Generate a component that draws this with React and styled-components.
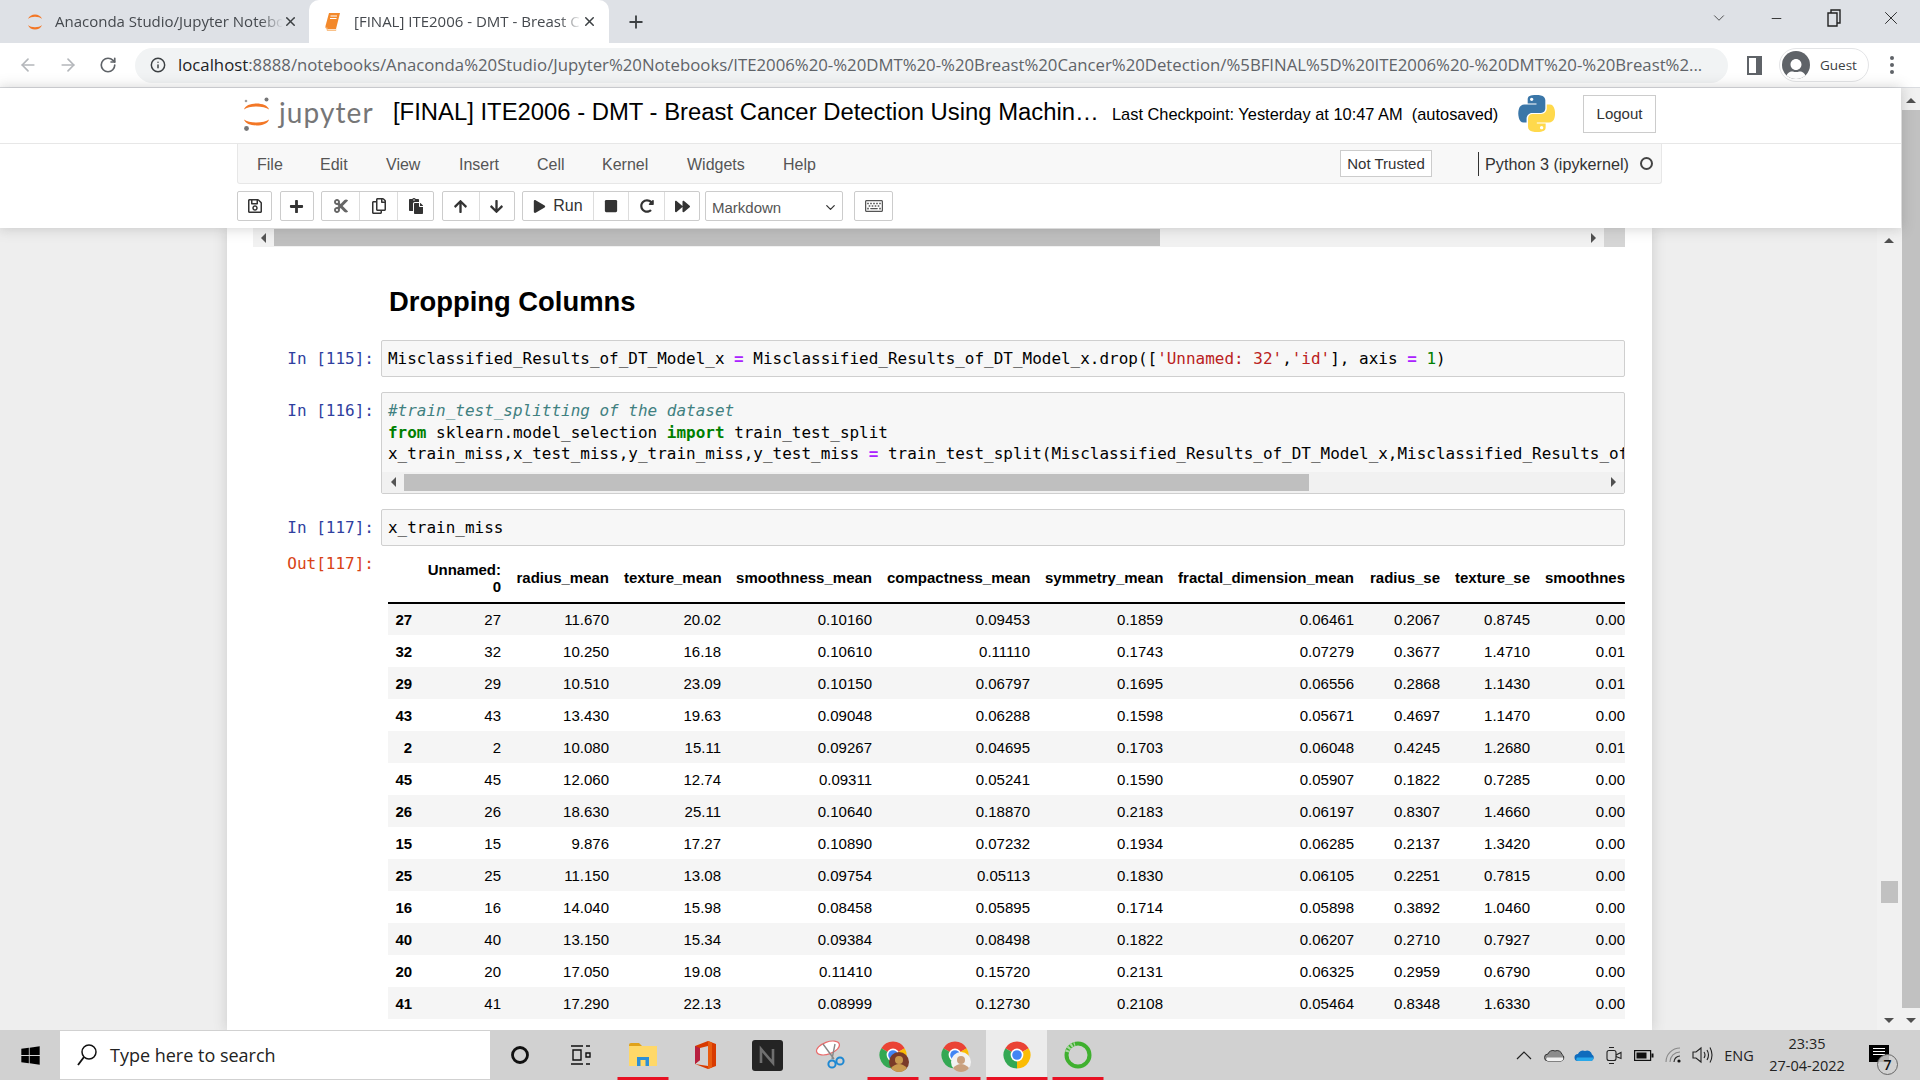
import React from "react";
import styled, { createGlobalStyle } from "styled-components";
import { ArrowLeft, ArrowRight, RotateCw, Info, Plus, X, ChevronDown, Minus } from "lucide-react";
import {
  FaRegSave, FaPlus, FaCut, FaRegCopy, FaPaste, FaArrowUp, FaArrowDown,
  FaPlay, FaStop, FaRedoAlt, FaForward, FaRegKeyboard, FaWindows, FaUser,
} from "react-icons/fa";

const Global = createGlobalStyle`
  html, body { margin: 0; padding: 0; width: 1920px; height: 1080px; overflow: hidden; }
  body { font-family: "Liberation Sans", Arial, sans-serif; background: #eee; }
  * { box-sizing: border-box; }
`;

const Page = styled.div`
  width: 1920px;
  height: 1080px;
  display: flex;
  flex-direction: column;
  overflow: hidden;
`;

/* browser chrome */
const TabStrip = styled.div`
  height: 43px;
  background: #dee1e6;
  display: flex;
  align-items: stretch;
`;
const Tab = styled.div`
  position: relative;
  width: ${(p) => (p.$active ? 300 : 309)}px;
  padding-left: ${(p) => (p.$active ? 15 : 25)}px;
  padding-right: ${(p) => (p.$active ? 12 : 11)}px;
  display: flex;
  align-items: center;
  background: ${(p) => (p.$active ? "#fff" : "transparent")};
  border-radius: 10px 10px 0 0;
`;
const TabTitle = styled.div`
  flex: 1;
  font-family: "Open Sans", sans-serif;
  font-size: 15px;
  color: #45494e;
  white-space: nowrap;
  overflow: hidden;
  margin: -2px 0 0 ${(p) => (p.$active ? 13 : 10)}px;
  -webkit-mask-image: linear-gradient(to right, #000 90%, transparent 100%);
  mask-image: linear-gradient(to right, #000 90%, transparent 100%);
`;
const NewTab = styled.div`
  width: 54px;
  display: flex;
  align-items: center;
  justify-content: center;
  color: #3c4043;
`;
const WindowControls = styled.div`
  margin-left: auto;
  display: flex;
  color: #222;
`;
const WindowButton = styled.div`
  width: 57.5px;
  height: 36px;
  display: flex;
  align-items: center;
  justify-content: center;
`;

const AddressRow = styled.div`
  height: 45px;
  background: #fff;
  border-bottom: 1px solid #dadce0;
  display: flex;
  align-items: center;
  padding-left: 8px;
  color: #5f6368;
`;
const NavButton = styled.div`
  width: 40px;
  display: flex;
  justify-content: center;
  color: ${(p) => (p.$off ? "#b4b7bb" : "#5f6368")};
`;
const Omnibox = styled.div`
  width: 1593px;
  height: 35px;
  margin-left: 7px;
  background: #f1f3f4;
  border-radius: 18px;
  display: flex;
  align-items: center;
  padding-left: 15px;
`;
const Url = styled.div`
  margin: -2px 0 0 12px;
  font-family: "Open Sans", sans-serif;
  font-size: 16.75px;
  color: #5f6368;
  white-space: nowrap;
  b { font-weight: 400; color: #202124; }
`;
const PanelIcon = styled.div`
  width: 15px;
  height: 19px;
  margin-left: 19px;
  border: 2px solid #5f6368;
  border-right-width: 6px;
`;
const GuestPill = styled.div`
  width: 90px;
  height: 34px;
  margin-left: 17px;
  border: 1px solid #e3e4e6;
  border-radius: 17px;
  display: flex;
  align-items: center;
  padding-left: 2px;
  font-family: "Open Sans", sans-serif;
  font-size: 13.5px;
  color: #3c4043;
`;
const Avatar = styled.div`
  width: 28px;
  height: 28px;
  border-radius: 50%;
  background: #5f6368;
  color: #fff;
  overflow: hidden;
  display: flex;
  align-items: flex-end;
  justify-content: center;
  margin-right: 10px;
  svg { margin-bottom: -2px; }
`;
const Dots = styled.div`
  margin-left: 21px;
  display: flex;
  flex-direction: column;
  gap: 3px;
  i { width: 4px; height: 4px; border-radius: 50%; background: #5f6368; }
`;

const Viewport = styled.div`
  flex: 1;
  min-height: 0;
  display: flex;
`;
const Main = styled.div`
  width: 1901px;
  display: flex;
  flex-direction: column;
`;

/* jupyter header */
const Header = styled.div`
  position: relative;
  z-index: 2;
  background: #fff;
  box-shadow: 0 0 12px 1px rgba(87, 87, 87, 0.25);
  height: 140px;
`;
const TitleRow = styled.div`
  height: 56px;
  border-bottom: 1px solid #e7e7e7;
  display: flex;
  align-items: center;
  padding: 0 0 4px 243px;
`;
const LogoText = styled.div`
  font-family: "Lato", sans-serif;
  font-size: 28px;
  color: #767677;
  margin: -3px 0 0 8px;
  letter-spacing: 1.1px;
  width: 114px;
`;
const NotebookName = styled.div`
  font-size: 23.85px;
  color: #000;
  width: 716px;
  white-space: nowrap;
  margin-top: -4px;
`;
const Checkpoint = styled.div`
  font-size: 16.4px;
  color: #000;
  margin: 1px 0 0 3px;
  white-space: pre;
  width: 406px;
`;
const PythonSvg = styled.svg`
  flex: none;
`;
const Logout = styled.div`
  width: 73px;
  height: 38px;
  margin-left: 28px;
  border: 1px solid #ccc;
  display: flex;
  align-items: center;
  justify-content: center;
  font-size: 15px;
  color: #333;
`;
const MenuBar = styled.div`
  width: 1425px;
  height: 40px;
  margin-left: 237px;
  background: #f8f8f8;
  border: 1px solid #e7e7e7;
  border-top: 0;
  border-radius: 0 0 3px 3px;
  display: flex;
  align-items: center;
  padding: 2px 0 0 19px;
`;
const MenuItem = styled.div`
  font-size: 16px;
  color: #555;
  width: ${(p) => p.$w}px;
`;
const TrustButton = styled.div`
  margin: -2px 0 0 auto;
  width: 92px;
  height: 27px;
  border: 1px solid #ccc;
  background: #fff;
  font-size: 15px;
  color: #333;
  display: flex;
  align-items: center;
  justify-content: center;
`;
const KernelName = styled.div`
  margin: -2px 0 0 46px;
  height: 24px;
  border-left: 1px solid #333;
  padding-left: 6px;
  font-size: 16.2px;
  line-height: 24px;
  color: #333;
  white-space: nowrap;
`;
const KernelDot = styled.div`
  width: 13px;
  height: 13px;
  margin: -2px 8px 0 11px;
  border: 2px solid #444;
  border-radius: 50%;
`;
const Toolbar = styled.div`
  margin: 7px 0 0 237px;
  display: flex;
  gap: 7.5px;
`;
const BtnGroup = styled.div`
  display: flex;
  height: 30px;
  margin-left: ${(p) => p.$ml || 0}px;
  border: 1px solid #ccc;
  border-radius: 2px;
  background: #fff;
`;
const ToolBtn = styled.div`
  width: ${(p) => p.$w}px;
  display: flex;
  align-items: center;
  justify-content: center;
  gap: 7px;
  color: #333;
  font-size: 16px;
  border-left: ${(p) => (p.$first ? "0" : "1px solid #ddd")};
`;
const CellType = styled.div`
  width: 138px;
  height: 30px;
  margin-left: -2.5px;
  border: 1px solid #ccc;
  border-radius: 2px;
  background: #fff;
  display: flex;
  align-items: center;
  justify-content: space-between;
  padding: 2px 4px 0 6px;
  font-size: 15px;
  color: #555;
`;

/* page area */
const Site = styled.div`
  flex: 1;
  min-height: 0;
  display: flex;
  background: #eee;
`;
const Gutter = styled.div`
  width: 1877px;
  padding-left: 227px;
`;
const Notebook = styled.div`
  width: 1425px;
  height: 802px;
  background: #fff;
  box-shadow: 0 0 12px 1px rgba(87, 87, 87, 0.2);
  padding-left: 26px;
  overflow: hidden;
`;
const HScroll = styled.div`
  height: ${(p) => p.$h}px;
  width: ${(p) => p.$w}px;
  margin-top: ${(p) => p.$mt || 0}px;
  background: #f1f1f1;
  display: flex;
  align-items: center;
  flex: none;
`;
const ArrowBox = styled.div`
  width: ${(p) => p.$w}px;
  display: flex;
  justify-content: center;
  flex: none;
`;
const Thumb = styled.div`
  width: ${(p) => p.$w}px;
  height: 17px;
  background: #bfbfbf;
  flex: none;
`;
const ArrowEnd = styled.div`
  flex: 1;
  display: flex;
  justify-content: flex-end;
  padding-right: ${(p) => p.$pr}px;
`;
const ScrollCorner = styled.div`
  width: 21px;
  align-self: stretch;
  background: #d5d5d5;
  flex: none;
`;
const ArrowLeftMark = styled.div`
  width: 0;
  height: 0;
  border-top: 5px solid transparent;
  border-bottom: 5px solid transparent;
  border-right: 5px solid #555;
`;
const ArrowRightMark = styled(ArrowLeftMark)`
  border-right: 0;
  border-left: 5px solid #505050;
`;
const VTrack = styled.div`
  width: ${(p) => p.$w}px;
  background: ${(p) => p.$bg};
  display: flex;
  flex-direction: column;
  align-items: center;
  flex: none;
`;
const ArrowUpMark = styled.div`
  width: 0;
  height: 0;
  margin-top: 10px;
  border-left: 5px solid transparent;
  border-right: 5px solid transparent;
  border-bottom: 5px solid #505050;
`;
const ArrowDownMark = styled.div`
  width: 0;
  height: 0;
  margin-top: ${(p) => p.$mt}px;
  border-left: 5px solid transparent;
  border-right: 5px solid transparent;
  border-top: 5px solid #505050;
`;
const VThumb = styled.div`
  width: ${(p) => p.$w}px;
  height: ${(p) => p.$h}px;
  margin-top: ${(p) => p.$mt}px;
  background: #c1c1c1;
  flex: none;
`;
const Heading = styled.h2`
  margin: 0;
  padding: 38px 0 21px 136px;
  font-size: 27.4px;
  line-height: 34px;
  font-weight: 700;
  color: #000;
`;
const CellRow = styled.div`
  display: flex;
  margin-bottom: ${(p) => p.$mb ?? 15}px;
`;
const Prompt = styled.div`
  width: 128px;
  padding-right: 7px;
  text-align: right;
  font-family: "DejaVu Sans Mono", monospace;
  font-size: 16px;
  line-height: 21.4px;
  padding-top: ${(p) => (p.$out ? 7 : 8)}px;
  color: ${(p) => (p.$out ? "#d84315" : "#303f9f")};
  white-space: pre;
  flex: none;
`;
const CellInput = styled.div`
  width: 1244px;
  border: 1px solid #cfcfcf;
  border-radius: 2px;
  background: #f7f7f7;
  overflow: hidden;
`;
const Code = styled.pre`
  margin: 0;
  padding: 7px 5px ${(p) => p.$pb ?? 7}px 6px;
  font-family: "DejaVu Sans Mono", monospace;
  font-size: 15.98px;
  line-height: 21.4px;
  color: #000;
  overflow: hidden;
  white-space: pre;
`;
const Op = styled.span` color: #aa22ff; font-weight: 700; `;
const Kw = styled.span` color: #008000; font-weight: 700; `;
const Cm = styled.span` color: #408080; font-style: italic; `;
const Str = styled.span` color: #ba2121; `;
const Num = styled.span` color: #008000; `;

const Output = styled.div`
  width: 1237px;
  margin-left: 7px;
  margin-top: 13px;
  overflow: hidden;
  flex: none;
`;
const DataTable = styled.table`
  border-collapse: collapse;
  table-layout: fixed;
  width: 1237px;
  font-size: 15px;
  color: #000;
  th, td { text-align: right; padding: 0 7.5px; white-space: nowrap; }
  th:last-child, td:last-child { padding-right: 0; }
  thead th {
    height: 44px;
    line-height: 17px;
    white-space: normal;
    vertical-align: middle;
    padding-bottom: 6px;
    border-bottom: 2px solid #000;
  }
  thead th:last-child { white-space: nowrap; }
  tbody tr { height: 32px; }
  tbody tr:nth-child(odd) { background: #f5f5f5; }
  tbody th { font-weight: 700; }
`;

/* taskbar */
const Taskbar = styled.div`
  height: 50px;
  background: #d1d1d1;
  display: flex;
  align-items: stretch;
  position: relative;
  z-index: 3;
`;
const Slot = styled.div`
  position: relative;
  width: ${(p) => p.$w || 62}px;
  display: flex;
  align-items: center;
  justify-content: center;
  flex: none;
  background: ${(p) => (p.$on ? "#ececec" : "transparent")};
  &::after {
    content: "";
    display: ${(p) => (p.$run ? "block" : "none")};
    position: absolute;
    bottom: 0;
    left: 50%;
    width: ${(p) => (p.$on ? "100%" : "51px")};
    height: 3px;
    transform: translateX(-50%);
    background: #e81123;
  }
`;
const SearchBox = styled.div`
  width: 430px;
  margin: 1px 0;
  background: #fff;
  display: flex;
  align-items: center;
  padding-left: 16px;
  gap: 12px;
  font-family: "Open Sans", sans-serif;
  font-size: 18px;
  color: #222;
`;
const Tray = styled.div`
  margin-left: auto;
  display: flex;
  align-items: center;
  color: #222;
`;
const TrayIcon = styled.div`
  width: ${(p) => p.$w || 30}px;
  display: flex;
  justify-content: center;
`;
const Lang = styled.div`
  font-family: "Open Sans", sans-serif;
  font-size: 14.5px;
  width: 36px;
  text-align: center;
  margin-left: 6px;
  color: #222;
`;
const Clock = styled.div`
  font-family: "Open Sans", sans-serif;
  font-size: 14.5px;
  line-height: 22px;
  text-align: center;
  width: 100px;
  color: #222;
`;
const Notif = styled.div`
  position: relative;
  width: 58px;
  height: 50px;
  margin-left: 5px;
`;
const Bubble = styled.div`
  position: absolute;
  left: 7px;
  top: 15px;
  width: 20px;
  height: 17px;
  background: #000;
  display: flex;
  flex-direction: column;
  gap: 2px;
  padding: 3px 4px;
  i { height: 1px; background: #fff; }
`;
const Badge = styled.div`
  position: absolute;
  left: 15px;
  top: 24px;
  width: 21px;
  height: 21px;
  border: 1px solid #666;
  border-radius: 50%;
  background: rgba(209, 209, 209, 0.85);
  font-family: "Open Sans", sans-serif;
  font-size: 14px;
  font-weight: 600;
  line-height: 19px;
  text-align: center;
  color: #111;
`;

const ROWS = [
  ["27", "27", "11.670", "20.02", "0.10160", "0.09453", "0.1859", "0.06461", "0.2067", "0.8745", "0.00"],
  ["32", "32", "10.250", "16.18", "0.10610", "0.11110", "0.1743", "0.07279", "0.3677", "1.4710", "0.01"],
  ["29", "29", "10.510", "23.09", "0.10150", "0.06797", "0.1695", "0.06556", "0.2868", "1.1430", "0.01"],
  ["43", "43", "13.430", "19.63", "0.09048", "0.06288", "0.1598", "0.05671", "0.4697", "1.1470", "0.00"],
  ["2", "2", "10.080", "15.11", "0.09267", "0.04695", "0.1703", "0.06048", "0.4245", "1.2680", "0.01"],
  ["45", "45", "12.060", "12.74", "0.09311", "0.05241", "0.1590", "0.05907", "0.1822", "0.7285", "0.00"],
  ["26", "26", "18.630", "25.11", "0.10640", "0.18870", "0.2183", "0.06197", "0.8307", "1.4660", "0.00"],
  ["15", "15", "9.876", "17.27", "0.10890", "0.07232", "0.1934", "0.06285", "0.2137", "1.3420", "0.00"],
  ["25", "25", "11.150", "13.08", "0.09754", "0.05113", "0.1830", "0.06105", "0.2251", "0.7815", "0.00"],
  ["16", "16", "14.040", "15.98", "0.08458", "0.05895", "0.1714", "0.05898", "0.3892", "1.0460", "0.00"],
  ["40", "40", "13.150", "15.34", "0.09384", "0.08498", "0.1822", "0.06207", "0.2710", "0.7927", "0.00"],
  ["20", "20", "17.050", "19.08", "0.11410", "0.15720", "0.2131", "0.06325", "0.2959", "0.6790", "0.00"],
  ["41", "41", "17.290", "22.13", "0.08999", "0.12730", "0.2108", "0.05464", "0.8348", "1.6330", "0.00"],
];
const COLUMNS = ["", "Unnamed: 0", "radius_mean", "texture_mean", "smoothness_mean", "compactness_mean",
  "symmetry_mean", "fractal_dimension_mean", "radius_se", "texture_se", "smoothnes"];
const COL_WIDTHS = [31.5, 89, 108, 112, 151, 158, 133, 191, 86, 90, 87.5];
const MENU = [["File", 63], ["Edit", 66], ["View", 73], ["Insert", 78], ["Cell", 65], ["Kernel", 85], ["Widgets", 96], ["Help", 40]];

const AnacondaIcon = ({ size = 20 }) => (
  <svg width={size} height={size} viewBox="0 0 20 20">
    <path d="M3 7C5 1 15 1 17 7C14 4 6 4 3 7Z" fill="#f37726" />
    <path d="M3 13C5 19 15 19 17 13C14 16 6 16 3 13Z" fill="#f37726" />
  </svg>
);

const BookIcon = () => (
  <svg width="17" height="20" viewBox="0 0 17 20">
    <path d="M5 1H16L12 17H4C2 17 1 16 1.5 14Z" fill="#f3892b" />
    <path d="M2 15.5L3 19H12L12.5 17.5H4.5C3.5 17.5 3 16.5 3.5 15.5Z" fill="#f9c189" />
    <path d="M6.5 4H13M6 6.5H12.5" stroke="#fff" strokeWidth="1" />
  </svg>
);

const JupyterMark = () => (
  <svg width="28" height="36" viewBox="0 0 28 36">
    <path d="M1 13.5C3 5.5 24 5.5 26 13.5C21 9.5 6 9.5 1 13.5Z" fill="#f37726" />
    <path d="M1 23.5C3 31.5 24 31.5 26 23.5C21 27.5 6 27.5 1 23.5Z" fill="#f37726" />
    <circle cx="23.5" cy="3.5" r="2" fill="#767677" />
    <circle cx="3.5" cy="32.5" r="2.4" fill="#767677" />
    <circle cx="3" cy="5" r="1.3" fill="#9e9e9e" />
  </svg>
);

const PYTHON_HALF =
  "M54.9 0c-4.6 0-9 .4-12.8 1.1C30.8 3.1 28.8 7.2 28.8 14.9V25h26.2v3.4H19c-7.6 0-14.3 4.6-16.4 13.3-2.4 10-2.5 16.2 0 26.6 1.9 7.8 6.3 13.3 13.9 13.3h9v-12c0-8.7 7.5-16.3 16.4-16.3h26.2c7.3 0 13.1-6 13.1-13.3v-25c0-7.1-6-12.4-13.1-13.6C63.5.3 59 0 54.9 0zM40.7 8c2.7 0 4.9 2.2 4.9 5 0 2.7-2.2 4.9-4.9 4.9-2.7 0-4.9-2.2-4.9-4.9 0-2.8 2.2-5 4.9-5z";

const PythonLogo = () => (
  <PythonSvg width="37" height="37" viewBox="0 0 110 110">
    <path d={PYTHON_HALF} fill="#3a76a8" />
    <path d={PYTHON_HALF} fill="#ffd94c" transform="rotate(180 55.5 55)" />
  </PythonSvg>
);

const ChromeIcon = ({ badge, face }) => (
  <svg width="30" height="30" viewBox="0 0 30 30" overflow="visible">
    <path d="M15 15L3.3 8.25A13.5 13.5 0 0 1 26.7 8.25Z" fill="#ea4335" />
    <path d="M15 15L26.7 8.25A13.5 13.5 0 0 1 15 28.5Z" fill="#fbbc04" />
    <path d="M15 15L15 28.5A13.5 13.5 0 0 1 3.3 8.25Z" fill="#34a853" />
    <circle cx="15" cy="15" r="6.4" fill="#fff" />
    <circle cx="15" cy="15" r="4.8" fill="#4285f4" />
    {badge && <circle cx="21" cy="22" r="10" fill={badge} />}
    {badge && <circle cx="21" cy="20" r="4" fill={face} />}
    {badge && <path d="M13 28Q21 20 29 28A10 10 0 0 1 13 28Z" fill={face} />}
  </svg>
);

const FolderIcon = () => (
  <svg width="28" height="24" viewBox="0 0 28 24">
    <path d="M0 2Q0 0 2 0H10L13 3H0Z" fill="#e0a21a" />
    <path d="M0 3H28V23H0Z" fill="#ffd868" />
    <path d="M8 23V14H20V23H16.5V17H11.5V23Z" fill="#2d8fd5" />
  </svg>
);

const OfficeIcon = () => (
  <svg width="24" height="28" viewBox="0 0 24 28">
    <path d="M15 0L23 3V25L15 28L2 23L15 25V5L7 7V19L2 23V5Z" fill="#d83b01" />
    <path d="M2 5L7 7V19L2 23Z" fill="#b7203f" />
    <path d="M15 0L19 1.5V26.5L15 28Z" fill="#e85c10" />
  </svg>
);

const NotionIcon = () => (
  <svg width="31" height="31" viewBox="0 0 31 31">
    <rect width="31" height="31" rx="3" fill="#242424" />
    <path d="M9 23V9L21 23V9" fill="none" stroke="#6f6f6f" strokeWidth="2.6" />
  </svg>
);

const SnipIcon = () => (
  <svg width="30" height="32" viewBox="0 0 30 32">
    <ellipse cx="13" cy="9" rx="12" ry="6" transform="rotate(-20 13 9)" fill="#fff" stroke="#ea6a6a" strokeWidth="1.2" />
    <path d="M8 5L19 20M20 5L17 20" stroke="#888" strokeWidth="1.4" />
    <circle cx="17" cy="25" r="3.6" fill="none" stroke="#1e88d2" strokeWidth="2" />
    <circle cx="25" cy="22" r="3.6" fill="none" stroke="#1e88d2" strokeWidth="2" />
  </svg>
);

const RingIcon = () => (
  <svg width="28" height="28" viewBox="0 0 28 28">
    <circle cx="14" cy="14" r="11.5" fill="none" stroke="#3fb02f" strokeWidth="4" />
    <path d="M3 11A11.5 11.5 0 0 1 11 3" fill="none" stroke="#a8d8a0" strokeWidth="4" strokeDasharray="2 1.5" />
  </svg>
);

const Cloud = ({ top, bottom, stroke }) => (
  <svg width="21" height="14" viewBox="0 0 21 14">
    <path d="M4 13H17A3.5 3.5 0 0 0 18 6.5A5 5 0 0 0 11 3A5 5 0 0 0 4 6A3.5 3.5 0 0 0 4 13Z" fill={top} stroke={stroke} strokeWidth="1" />
    <path d="M3 9.5H19Q20 12 17 13H4Q1 12 3 9.5Z" fill={bottom} />
  </svg>
);

function App() {
  return (
    <Page>
      <Global />
      <TabStrip>
        <Tab>
          <AnacondaIcon />
          <TabTitle>Anaconda Studio/Jupyter Notebc</TabTitle>
          <X size={15} strokeWidth={2.4} color="#3c4043" />
        </Tab>
        <Tab $active>
          <BookIcon />
          <TabTitle $active>[FINAL] ITE2006 - DMT - Breast C</TabTitle>
          <X size={15} strokeWidth={2.4} color="#3c4043" />
        </Tab>
        <NewTab><Plus size={20} strokeWidth={2.2} /></NewTab>
        <WindowControls>
          <WindowButton><ChevronDown size={18} strokeWidth={1} /></WindowButton>
          <WindowButton><Minus size={15} strokeWidth={1.4} /></WindowButton>
          <WindowButton>
            <svg width="14" height="20" viewBox="0 0 14 20">
              <path d="M1 5H10V18H1ZM4 5V2H13V15H10" fill="none" stroke="#222" strokeWidth="1.4" />
            </svg>
          </WindowButton>
          <WindowButton><X size={22} strokeWidth={1} /></WindowButton>
        </WindowControls>
      </TabStrip>

      <AddressRow>
        <NavButton $off><ArrowLeft size={20} /></NavButton>
        <NavButton $off><ArrowRight size={20} /></NavButton>
        <NavButton><RotateCw size={18} strokeWidth={2.2} /></NavButton>
        <Omnibox>
          <Info size={16} strokeWidth={2.2} color="#3c4043" />
          <Url>
            <b>localhost</b>:8888/notebooks/Anaconda%20Studio/Jupyter%20Notebooks/ITE2006%20-%20DMT%20-%20Breast%20Cancer%20Detection/%5BFINAL%5D%20ITE2006%20-%20DMT%20-%20Breast%2...
          </Url>
        </Omnibox>
        <PanelIcon />
        <GuestPill>
          <Avatar><FaUser size={22} /></Avatar>
          Guest
        </GuestPill>
        <Dots><i /><i /><i /></Dots>
      </AddressRow>

      <Viewport>
        <Main>
          <Header>
            <TitleRow>
              <JupyterMark />
              <LogoText>jupyter</LogoText>
              <NotebookName>[FINAL] ITE2006 - DMT - Breast Cancer Detection Using Machin…</NotebookName>
              <Checkpoint>{"Last Checkpoint: Yesterday at 10:47 AM  (autosaved)"}</Checkpoint>
              <PythonLogo />
              <Logout>Logout</Logout>
            </TitleRow>
            <MenuBar>
              {MENU.map(([label, w]) => <MenuItem key={label} $w={w}>{label}</MenuItem>)}
              <TrustButton>Not Trusted</TrustButton>
              <KernelName>Python 3 (ipykernel)</KernelName>
              <KernelDot />
            </MenuBar>
            <Toolbar>
              <BtnGroup><ToolBtn $first $w={33}><FaRegSave size={16} /></ToolBtn></BtnGroup>
              <BtnGroup><ToolBtn $first $w={32}><FaPlus size={15} /></ToolBtn></BtnGroup>
              <BtnGroup>
                <ToolBtn $first $w={37}><FaCut size={16} color="#666" /></ToolBtn>
                <ToolBtn $w={38}><FaRegCopy size={16} /></ToolBtn>
                <ToolBtn $w={36}><FaPaste size={16} /></ToolBtn>
              </BtnGroup>
              <BtnGroup>
                <ToolBtn $first $w={36}><FaArrowUp size={15} /></ToolBtn>
                <ToolBtn $w={35}><FaArrowDown size={15} /></ToolBtn>
              </BtnGroup>
              <BtnGroup>
                <ToolBtn $first $w={70}><FaPlay size={13} />Run</ToolBtn>
                <ToolBtn $w={35}><FaStop size={14} /></ToolBtn>
                <ToolBtn $w={36}><FaRedoAlt size={14} /></ToolBtn>
                <ToolBtn $w={35}><FaForward size={15} /></ToolBtn>
              </BtnGroup>
              <CellType>Markdown<ChevronDown size={15} strokeWidth={2} color="#333" /></CellType>
              <BtnGroup $ml={3.5}><ToolBtn $first $w={37}><FaRegKeyboard size={18} color="#555" /></ToolBtn></BtnGroup>
            </Toolbar>
          </Header>

          <Site>
            <Gutter>
              <Notebook>
                <HScroll $h={19} $w={1372}>
                  <ArrowBox $w={21}><ArrowLeftMark /></ArrowBox>
                  <Thumb $w={886} />
                  <ArrowEnd $pr={8}><ArrowRightMark /></ArrowEnd>
                  <ScrollCorner />
                </HScroll>
                <Heading>Dropping Columns</Heading>

                <CellRow>
                  <Prompt>In [115]:</Prompt>
                  <CellInput>
                    <Code>Misclassified_Results_of_DT_Model_x <Op>=</Op> Misclassified_Results_of_DT_Model_x.drop([<Str>'Unnamed: 32'</Str>,<Str>'id'</Str>], axis <Op>=</Op> <Num>1</Num>)</Code>
                  </CellInput>
                </CellRow>

                <CellRow>
                  <Prompt>In [116]:</Prompt>
                  <CellInput>
                    <Code $pb={0}>
                      <Cm>#train_test_splitting of the dataset</Cm>{"\n"}
                      <Kw>from</Kw> sklearn.model_selection <Kw>import</Kw> train_test_split{"\n"}
                      x_train_miss,x_test_miss,y_train_miss,y_test_miss <Op>=</Op> train_test_split(Misclassified_Results_of_DT_Model_x,Misclassified_Results_of_DT_Model_y)
                    </Code>
                    <HScroll $h={21} $w={1242} $mt={7}>
                      <ArrowBox $w={22}><ArrowLeftMark /></ArrowBox>
                      <Thumb $w={905} />
                      <ArrowEnd $pr={8}><ArrowRightMark /></ArrowEnd>
                    </HScroll>
                  </CellInput>
                </CellRow>

                <CellRow $mb={0}>
                  <Prompt>In [117]:</Prompt>
                  <CellInput><Code>x_train_miss</Code></CellInput>
                </CellRow>

                <CellRow $mb={0}>
                  <Prompt $out>Out[117]:</Prompt>
                  <Output>
                    <DataTable>
                      <colgroup>
                        {COL_WIDTHS.map((w, i) => <col key={i} style={{ width: w }} />)}
                      </colgroup>
                      <thead>
                        <tr>{COLUMNS.map((c, i) => <th key={i}>{c}</th>)}</tr>
                      </thead>
                      <tbody>
                        {ROWS.map((row, r) => (
                          <tr key={r}>
                            {row.map((v, i) => (i === 0 ? <th key={i}>{v}</th> : <td key={i}>{v}</td>))}
                          </tr>
                        ))}
                      </tbody>
                    </DataTable>
                  </Output>
                </CellRow>
              </Notebook>
            </Gutter>
            <VTrack $w={24} $bg="#f1f1f1">
              <ArrowUpMark />
              <VThumb $w={17} $h={22} $mt={638} />
              <ArrowDownMark $mt={115} />
            </VTrack>
          </Site>
        </Main>
        <VTrack $w={19} $bg="#f1f1f1">
          <ArrowUpMark />
          <VThumb $w={18} $h={898} $mt={7} />
          <ArrowDownMark $mt={10} />
        </VTrack>
      </Viewport>

      <Taskbar>
        <Slot $w={60}><FaWindows size={21} color="#000" /></Slot>
        <SearchBox>
          <svg width="22" height="24" viewBox="0 0 22 24">
            <circle cx="13" cy="9" r="7" fill="none" stroke="#111" strokeWidth="1.5" />
            <path d="M8 14L2 22" stroke="#111" strokeWidth="1.8" />
          </svg>
          Type here to search
        </SearchBox>
        <Slot $w={60}>
          <svg width="20" height="20" viewBox="0 0 20 20"><circle cx="10" cy="10" r="7.5" fill="none" stroke="#111" strokeWidth="2.8" /></svg>
        </Slot>
        <Slot>
          <svg width="22" height="22" viewBox="0 0 22 22">
            <path d="M1 2H13M1 20H13M3 6H11V16H3Z M16 2H20M16 9H20V13H16ZM16 20H20" fill="none" stroke="#111" strokeWidth="1.4" />
          </svg>
        </Slot>
        <Slot $run><FolderIcon /></Slot>
        <Slot><OfficeIcon /></Slot>
        <Slot><NotionIcon /></Slot>
        <Slot $w={64}><SnipIcon /></Slot>
        <Slot $run><ChromeIcon badge="#7a3a28" face="#c9994e" /></Slot>
        <Slot $run><ChromeIcon badge="#f2f2f2" face="#c9a07e" /></Slot>
        <Slot $w={61} $on $run><ChromeIcon /></Slot>
        <Slot $run><RingIcon /></Slot>
        <Tray>
          <TrayIcon><svg width="16" height="9" viewBox="0 0 16 9"><path d="M1 8L8 1L15 8" fill="none" stroke="#222" strokeWidth="1.2" /></svg></TrayIcon>
          <TrayIcon><Cloud top="#8c8c8c" bottom="#f0f0f0" stroke="#333" /></TrayIcon>
          <TrayIcon><Cloud top="#0f6cbd" bottom="#28a8ea" stroke="none" /></TrayIcon>
          <TrayIcon>
            <svg width="16" height="19" viewBox="0 0 16 19">
              <rect x="1" y="4.5" width="9" height="10" rx="2" fill="none" stroke="#222" strokeWidth="1.1" />
              <path d="M10 9L15 6.5V12.5L10 10.5M3 1.5H8M3 17.5H8" fill="none" stroke="#222" strokeWidth="1.1" />
            </svg>
          </TrayIcon>
          <TrayIcon>
            <svg width="20" height="11" viewBox="0 0 20 11">
              <rect x="0.6" y="0.6" width="16" height="9.8" fill="none" stroke="#111" strokeWidth="1.2" />
              <rect x="2.5" y="2.5" width="10" height="6" fill="#111" />
              <rect x="17.5" y="3.5" width="2" height="4" fill="#111" />
            </svg>
          </TrayIcon>
          <TrayIcon>
            <svg width="18" height="16" viewBox="0 0 18 16">
              <path d="M1 15A14 14 0 0 1 15 1M5 15A10 10 0 0 1 15 5" fill="none" stroke="#888" strokeWidth="1.1" />
              <path d="M9 15A6 6 0 0 1 15 9" fill="none" stroke="#333" strokeWidth="1.2" />
              <circle cx="14" cy="14" r="1.6" fill="#111" />
            </svg>
          </TrayIcon>
          <TrayIcon $w={26}>
            <svg width="21" height="18" viewBox="0 0 21 18">
              <path d="M1 6H4L9 2V16L4 12H1Z" fill="none" stroke="#222" strokeWidth="1.1" />
              <path d="M12 6Q14 9 12 12M15 4Q18 9 15 14M18 1.5Q22 9 18 16.5" fill="none" stroke="#222" strokeWidth="1.1" />
            </svg>
          </TrayIcon>
          <Lang>ENG</Lang>
          <Clock>23:35<br />27-04-2022</Clock>
          <Notif>
            <Bubble><i /><i /><i /></Bubble>
            <Badge>7</Badge>
          </Notif>
        </Tray>
      </Taskbar>
    </Page>
  );
}

export default App;
